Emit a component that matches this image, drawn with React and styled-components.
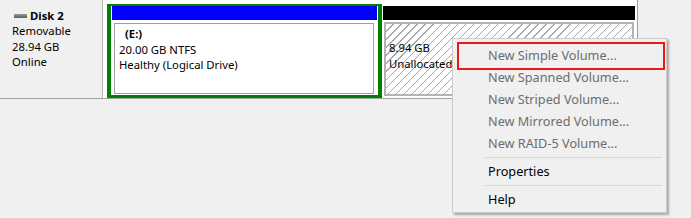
import styled, { createGlobalStyle } from "styled-components";

const GlobalStyle = createGlobalStyle`
  html, body {
    margin: 0;
    padding: 0;
    background: #f0f0f0;
  }
  body {
    font-family: "Noto Sans", "Segoe UI", sans-serif;
    font-size: 11.3px;
    color: #000;
  }
`;

const menuItems = [
  { label: "New Simple Volume...", disabled: true },
  { label: "New Spanned Volume...", disabled: true },
  { label: "New Striped Volume...", disabled: true },
  { label: "New Mirrored Volume...", disabled: true },
  { label: "New RAID-5 Volume...", disabled: true },
  { separator: true },
  { label: "Properties" },
  { separator: true },
  { label: "Help" },
];

const App = () => {
  return (
    <Page>
      <GlobalStyle />
      <DiskRow>
        <DiskLabel>
          <DiskName>
            <DiskIcon />
            Disk 2
          </DiskName>
          <LabelLine>Removable</LabelLine>
          <LabelLine>28.94 GB</LabelLine>
          <LabelLine>Online</LabelLine>
        </DiskLabel>
        <VolumeStrip>
          <Extended>
            <Partition>
              <PartitionHeader color="#0000ff" />
              <PartitionBody>
                <InfoBox>
                  <VolumeName>(E:)</VolumeName>
                  <InfoLine>20.00 GB NTFS</InfoLine>
                  <InfoLine>Healthy (Logical Drive)</InfoLine>
                </InfoBox>
              </PartitionBody>
            </Partition>
          </Extended>
          <Unallocated>
            <PartitionHeader color="#000" />
            <HatchBox>
              <InfoLine>8.94 GB</InfoLine>
              <InfoLine>Unallocated</InfoLine>
            </HatchBox>
          </Unallocated>
        </VolumeStrip>
      </DiskRow>

      <Menu>
        {menuItems.map((item, i) =>
          item.separator ? (
            <Separator key={i} />
          ) : (
            <MenuItem key={i} disabled={item.disabled}>
              {item.label}
            </MenuItem>
          )
        )}
      </Menu>
      <Highlight />
    </Page>
  );
};

const Page = styled.div`
  position: relative;
  width: 691px;
  height: 218px;
  overflow: hidden;
`;

const DiskRow = styled.div`
  display: flex;
  width: 638px;
  height: 99px;
  box-sizing: border-box;
  border-bottom: 1px solid #a0a0a0;
`;

const DiskLabel = styled.div`
  width: 103px;
  box-sizing: border-box;
  padding: 8px 0 0 12px;
  border-right: 1px solid #b4b4b4;
  line-height: 15.4px;
`;

const DiskName = styled.div`
  display: flex;
  align-items: center;
  font-weight: bold;
`;

const DiskIcon = styled.span`
  display: inline-block;
  width: 13px;
  height: 4px;
  margin: 0 3px 0 2px;
  background: linear-gradient(#9a9a9a, #5a5a5a);
`;

const LabelLine = styled.div`
  white-space: nowrap;
`;

const VolumeStrip = styled.div`
  flex: 1;
  display: flex;
  align-items: flex-start;
  gap: 1px;
  padding: 4px 0 0 4px;
  background: #fff;
  border-right: 1px solid #a0a0a0;
`;

const Extended = styled.div`
  width: 275px;
  height: 94px;
  box-sizing: border-box;
  border: 4px solid #008000;
  border-top-width: 2px;
  border-bottom-width: 3px;
  padding: 0 1px 1px 1px;
  background: #fff;
`;

const Partition = styled.div`
  display: flex;
  flex-direction: column;
  height: 100%;
`;

const PartitionHeader = styled.div`
  height: 14px;
  flex: none;
  background: ${(p) => p.color};
`;

const PartitionBody = styled.div`
  flex: 1;
  display: flex;
  padding: 3px 3px 0 2px;
`;

const InfoBox = styled.div`
  flex: 1;
  border: 1px solid #a0a0a0;
  padding: 2px 0 0 4px;
  line-height: 15.5px;
`;

const VolumeName = styled.div`
  font-weight: bold;
  padding-left: 6px;
`;

const InfoLine = styled.div`
  white-space: nowrap;
`;

const Unallocated = styled.div`
  width: 252px;
  height: 90px;
  margin-top: 2px;
  display: flex;
  flex-direction: column;
  gap: 2px;
`;

const HatchBox = styled.div`
  flex: 1;
  margin: 0 1px;
  border: 2px solid #b4b4b4;
  padding: 16px 0 0 3px;
  line-height: 15.5px;
  overflow: hidden;
  background: repeating-linear-gradient(
    135deg,
    #fff 0,
    #fff 4.7px,
    #a8a8a8 4.7px,
    #a8a8a8 5.7px
  );
`;

const Menu = styled.div`
  position: absolute;
  left: 452px;
  top: 38px;
  width: 215px;
  box-sizing: border-box;
  padding: 5px 2px 2px 2px;
  background: #f0f0f0;
  border: 1px solid #cccccc;
  box-shadow: 2px 2px 2px rgba(0, 0, 0, 0.3);
  font-size: 12.7px;
`;

const MenuItem = styled.div`
  height: 22px;
  line-height: 22px;
  padding-left: 33px;
  white-space: nowrap;
  color: ${(p) => (p.disabled ? "#6d6d6d" : "#000")};
`;

const Separator = styled.div`
  height: 6px;
  margin: 0 2px 0 30px;
  display: flex;
  align-items: center;
  &::after {
    content: "";
    flex: 1;
    height: 1px;
    background: #d7d7d7;
  }
`;

const Highlight = styled.div`
  position: absolute;
  left: 457px;
  top: 42px;
  width: 208px;
  height: 28px;
  box-sizing: border-box;
  border: 2px solid #f01414;
  pointer-events: none;
`;

export default App;
